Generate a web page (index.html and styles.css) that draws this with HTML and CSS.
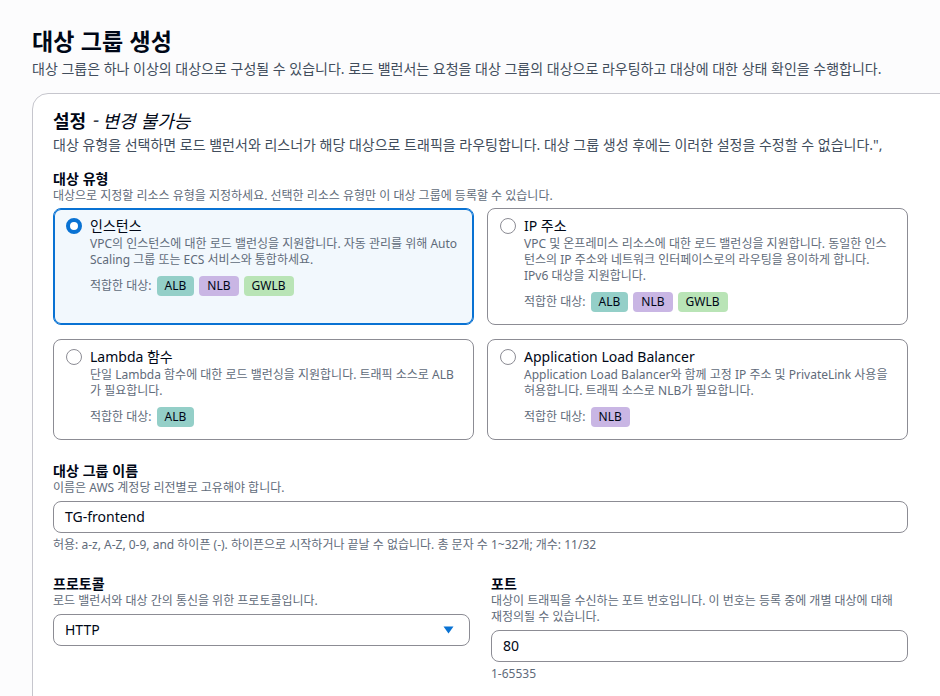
FILE: index.html
```html
<!DOCTYPE html>
<html lang="ko">
<head>
	<meta charset="UTF-8">
	<meta name="viewport" content="width=device-width,initial-scale=1">
	<title>대상 그룹 생성</title>
	<link rel="stylesheet" href="styles.css">
</head>
<body>
	<div class="page">
		<h1 class="title">대상 그룹 생성</h1>
		<p class="lead">대상 그룹은 하나 이상의 대상으로 구성될 수 있습니다. 로드 밸런서는 요청을 대상 그룹의 대상으로 라우팅하고 대상에 대한 상태 확인을 수행합니다.</p>

		<section class="card">
			<div class="card-inner">
				<h2 class="card-title">설정 <em>- 변경 불가능</em></h2>
				<p class="card-desc">대상 유형을 선택하면 로드 밸런서와 리스너가 해당 대상으로 트래픽을 라우팅합니다. 대상 그룹 생성 후에는 이러한 설정을 수정할 수 없습니다.",</p>

				<!-- 대상 유형 -->
				<div class="field">
					<div class="label">대상 유형</div>
					<div class="hint">대상으로 지정할 리소스 유형을 지정하세요. 선택한 리소스 유형만 이 대상 그룹에 등록할 수 있습니다.</div>
					<div class="tiles">
						<div class="tile selected">
							<span class="radio"></span>
							<div class="tile-body">
								<div class="tile-title">인스턴스</div>
								<div class="tile-desc">VPC의 인스턴스에 대한 로드 밸런싱을 지원합니다. 자동 관리를 위해 Auto Scaling 그룹 또는 ECS 서비스와 통합하세요.</div>
								<div class="fit">적합한 대상: <span class="badge alb">ALB</span><span class="badge nlb">NLB</span><span class="badge gwlb">GWLB</span></div>
							</div>
						</div>
						<div class="tile">
							<span class="radio"></span>
							<div class="tile-body">
								<div class="tile-title">IP 주소</div>
								<div class="tile-desc">VPC 및 온프레미스 리소스에 대한 로드 밸런싱을 지원합니다. 동일한 인스턴스의 IP 주소와 네트워크 인터페이스로의 라우팅을 용이하게 합니다. IPv6 대상을 지원합니다.</div>
								<div class="fit">적합한 대상: <span class="badge alb">ALB</span><span class="badge nlb">NLB</span><span class="badge gwlb">GWLB</span></div>
							</div>
						</div>
						<div class="tile">
							<span class="radio"></span>
							<div class="tile-body">
								<div class="tile-title">Lambda 함수</div>
								<div class="tile-desc">단일 Lambda 함수에 대한 로드 밸런싱을 지원합니다. 트래픽 소스로 ALB가 필요합니다.</div>
								<div class="fit">적합한 대상: <span class="badge alb">ALB</span></div>
							</div>
						</div>
						<div class="tile">
							<span class="radio"></span>
							<div class="tile-body">
								<div class="tile-title">Application Load Balancer</div>
								<div class="tile-desc">Application Load Balancer와 함께 고정 IP 주소 및 PrivateLink 사용을 허용합니다. 트래픽 소스로 NLB가 필요합니다.</div>
								<div class="fit">적합한 대상: <span class="badge nlb">NLB</span></div>
							</div>
						</div>
					</div>
				</div>

				<!-- 대상 그룹 이름 -->
				<div class="field">
					<div class="label">대상 그룹 이름</div>
					<div class="hint">이름은 AWS 계정당 리전별로 고유해야 합니다.</div>
					<div class="input">TG-frontend</div>
					<div class="note">허용: a-z, A-Z, 0-9, and 하이픈 (-). 하이픈으로 시작하거나 끝날 수 없습니다. 총 문자 수 1~32개; 개수: 11/32</div>
				</div>

				<div class="field cols">
					<div>
						<div class="label">프로토콜</div>
						<div class="hint">로드 밸런서와 대상 간의 통신을 위한 프로토콜입니다.</div>
						<div class="input select">
							<span>HTTP</span>
							<svg width="11" height="8" viewBox="0 0 11 8"><path d="M0.5 0.5h10L5.5 7.5z" fill="#0972d3"/></svg>
						</div>
					</div>
					<div>
						<div class="label">포트</div>
						<div class="hint">대상이 트래픽을 수신하는 포트 번호입니다. 이 번호는 등록 중에 개별 대상에 대해<br>재정의될 수 있습니다.</div>
						<div class="input">80</div>
						<div class="note">1-65535</div>
					</div>
				</div>
			</div>
		</section>
	</div>
</body>
</html>
```

FILE: styles.css
```css
*{
	padding: 0;
	margin: 0;
	box-sizing: border-box;
}
html,body{
	background: #fcfcfd;
	overflow: hidden;
	font-family: "Noto Sans", "Noto Sans CJK KR", sans-serif;
	color: #000716;
}
.page{
	width: 940px;
	height: 696px;
	overflow: hidden;
	padding: 25px 0 0 32px;
}
.title{
	font-size: 23px;
	line-height: 30px;
	font-weight: 700;
	font-family: "Noto Sans CJK KR", sans-serif;
}
.lead{
	margin-top: 4px;
	font-size: 14px;
	line-height: 20px;
	color: #414d5c;
}
.card{
	margin-top: 14px;
	width: 960px;
	background: #fff;
	border: 1px solid #c6c6cd;
	border-radius: 16px;
	padding: 14px 20px 40px;
}
.card-inner{
	width: 855px;
}
.card-title{
	font-size: 18px;
	line-height: 24px;
	font-weight: 700;
	font-family: "Noto Sans CJK KR", sans-serif;
}
.card-title em{
	font-weight: 400;
	font-style: italic;
}
.card-desc{
	margin-top: 3px;
	font-size: 14px;
	line-height: 20px;
	color: #414d5c;
}
.field{
	margin-top: 13px;
}
.field + .field{
	margin-top: 20px;
}
.label{
	font-size: 14px;
	line-height: 20px;
	font-weight: 700;
	font-family: "Noto Sans CJK KR", sans-serif;
}
.hint{
	font-size: 12px;
	line-height: 16px;
	color: #5f6b7a;
}
.note{
	margin-top: 4px;
	font-size: 12px;
	line-height: 16px;
	color: #5f6b7a;
}
.tiles{
	margin-top: 4px;
	display: grid;
	grid-template-columns: 1fr 1fr;
	gap: 14px 13px;
}
.tile{
	display: flex;
	gap: 8px;
	border: 1px solid #8c8c94;
	border-radius: 8px;
	padding: 7px 12px 12px;
	background: #fff;
}
.tile.selected{
	border-color: #0972d3;
	box-shadow: inset 0 0 0 1px #0972d3;
	background: #f2f8fd;
}
.radio{
	flex: none;
	width: 16px;
	height: 16px;
	margin-top: 2px;
	border: 1px solid #8c8c94;
	border-radius: 50%;
	background: #fff;
}
.selected .radio{
	border: 4.5px solid #0972d3;
}
.tile-title{
	font-size: 14px;
	line-height: 20px;
}
.tile-desc{
	font-size: 12px;
	line-height: 16px;
	color: #5f6b7a;
}
.fit{
	margin-top: 8px;
	display: flex;
	align-items: center;
	gap: 5px;
	font-size: 12px;
	line-height: 20px;
	color: #5f6b7a;
}
.badge{
	display: inline-block;
	height: 20px;
	padding: 0 8px;
	border-radius: 4px;
	color: #000716;
	font-size: 12px;
	line-height: 20px;
}
.alb{
	background: #94cfc8;
}
.nlb{
	background: #c9b6e4;
}
.gwlb{
	background: #b9e4b6;
}
.input{
	margin-top: 5px;
	height: 32px;
	border: 1px solid #8c8c94;
	border-radius: 8px;
	padding: 0 11px;
	font-size: 14px;
	line-height: 30px;
	background: #fff;
}
.select{
	display: flex;
	align-items: center;
	justify-content: space-between;
	padding-right: 15px;
}
.cols{
	display: grid;
	grid-template-columns: 1fr 1fr;
	gap: 21px;
}
```
